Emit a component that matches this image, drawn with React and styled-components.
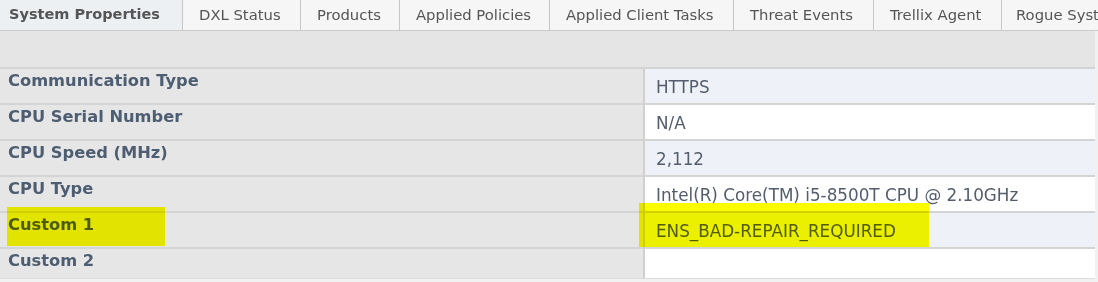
import React from "react";
import styled, { createGlobalStyle } from "styled-components";

const GlobalStyle = createGlobalStyle`
  html, body {
    margin: 0;
    padding: 0;
    background: #ffffff;
  }
  body {
    font-family: "DejaVu Sans", Verdana, sans-serif;
  }
`;

const Page = styled.div`
  width: 1098px;
  height: 282px;
  overflow: hidden;
  background: #f1f1f1;
`;

const TabBar = styled.div`
  display: flex;
  height: 31px;
  border-bottom: 1px solid #cbcbcb;
  background: #f4f4f4;
  white-space: nowrap;
  box-sizing: border-box;
`;

const Tab = styled.div`
  flex: 0 0 ${(p) => p.width}px;
  display: flex;
  align-items: center;
  padding: 0 0 2px ${(p) => p.pad}px;
  box-sizing: border-box;
  font-size: ${(p) => (p.active ? "14.5px" : "14.8px")};
  color: #555;
  font-weight: ${(p) => (p.active ? "bold" : "normal")};
  background: ${(p) => (p.active ? "#edf0f3" : "#f6f6f6")};
  border-right: 1px solid #c6c6c6;
  overflow: hidden;
  &:last-child {
    border-right: none;
  }
`;

const Band = styled.div`
  height: 36px;
  margin-right: 3px;
  background: #e5e5e5;
  border-bottom: 2px solid #d4d4d4;
`;

const Table = styled.div`
  display: grid;
  grid-template-columns: 643px 1fr;
  margin-right: 3px;
`;

const Label = styled.div`
  position: relative;
  height: ${(p) => (p.last ? 30 : 36)}px;
  box-sizing: border-box;
  border-bottom: ${(p) => (p.last ? "1px solid #dcdcdc" : "2px solid #d4d4d4")};
  background: #e6e6e6;
  padding: 2px 0 0 8px;
  font-size: 16.3px;
  line-height: 20px;
  font-weight: bold;
  color: #4d5d72;
  white-space: nowrap;
`;

const Value = styled.div`
  position: relative;
  height: ${(p) => (p.last ? 30 : 36)}px;
  box-sizing: border-box;
  border-bottom: ${(p) => (p.last ? "1px solid #dcdcdc" : "2px solid #d4d4d4")};
  border-left: 2px solid #d0d0d0;
  background: ${(p) => (p.shade ? "#eef2f8" : "#ffffff")};
  padding: 8px 0 0 11px;
  font-size: 16.8px;
  line-height: 20px;
  color: #535d6b;
  white-space: nowrap;
`;

const Text = styled.span`
  position: relative;
`;

const Marker = styled.span`
  position: absolute;
  top: ${(p) => p.top}px;
  left: ${(p) => p.left}px;
  width: ${(p) => p.w}px;
  height: ${(p) => p.h}px;
  background: #fcfc00;
  mix-blend-mode: multiply;
  pointer-events: none;
`;

const tabs = [
  { name: "System Properties", width: 183, pad: 9, active: true },
  { name: "DXL Status", width: 118, pad: 16 },
  { name: "Products", width: 99, pad: 16 },
  { name: "Applied Policies", width: 150, pad: 16 },
  { name: "Applied Client Tasks", width: 184, pad: 16 },
  { name: "Threat Events", width: 140, pad: 16 },
  { name: "Trellix Agent", width: 128, pad: 16 },
  { name: "Rogue System Sensor", width: 120, pad: 14 },
];

const rows = [
  { label: "Communication Type", value: "HTTPS" },
  { label: "CPU Serial Number", value: "N/A" },
  { label: "CPU Speed (MHz)", value: "2,112" },
  { label: "CPU Type", value: "Intel(R) Core(TM) i5-8500T CPU @ 2.10GHz" },
  { label: "Custom 1", value: "ENS_BAD-REPAIR_REQUIRED", marked: true },
  { label: "Custom 2", value: "" },
];

export default function App() {
  return (
    <Page>
      <GlobalStyle />
      <TabBar>
        {tabs.map((t) => (
          <Tab key={t.name} width={t.width} pad={t.pad} active={t.active}>
            {t.name}
          </Tab>
        ))}
      </TabBar>
      <Band />
      <Table>
        {rows.map((r, i) => {
          const last = i === rows.length - 1;
          return (
            <React.Fragment key={r.label}>
              <Label last={last}>
                <Text>{r.label}</Text>
                {r.marked && <Marker top={-6} left={7} w={158} h={39} />}
              </Label>
              <Value last={last} shade={i % 2 === 0}>
                <Text>{r.value}</Text>
                {r.marked && <Marker top={-10} left={-6} w={290} h={44} />}
              </Value>
            </React.Fragment>
          );
        })}
      </Table>
    </Page>
  );
}
